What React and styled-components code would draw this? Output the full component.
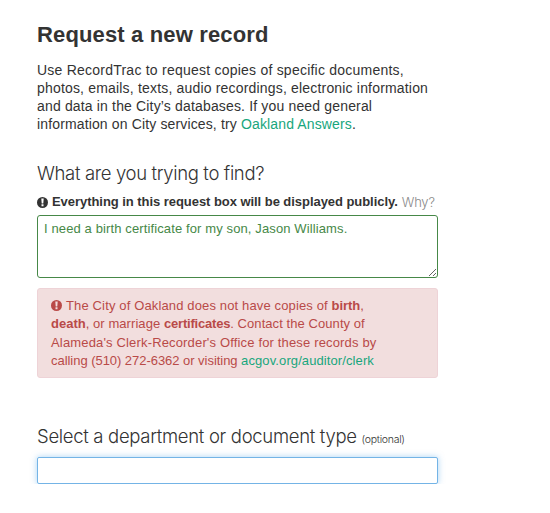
import React from "react";
import styled, { createGlobalStyle } from "styled-components";

const GlobalStyle = createGlobalStyle`
  * { box-sizing: border-box; }
  body {
    margin: 0;
    background: #fff;
    color: #333;
    font-family: "Liberation Sans", Arial, sans-serif;
  }
`;

const Page = styled.main`
  display: flex;
  flex-direction: column;
  width: 438px;
  padding: 20px 0 0 37px;
`;

const Title = styled.h1`
  margin: 0;
  font-size: 22px;
  line-height: 30px;
  font-weight: 700;
  letter-spacing: 0.15px;
`;

const Intro = styled.p`
  margin: 11px 0 0;
  font-size: 14px;
  line-height: 18px;
`;

const Line = styled.span`
  display: block;
  white-space: nowrap;
  letter-spacing: ${(p) => p.$track || 0}px;
`;

const Bold = styled.strong`
  font-weight: 700;
  letter-spacing: ${(p) => p.$track || 0}px;
`;

const Link = styled.a`
  color: #18a67d;
  text-decoration: none;
  letter-spacing: ${(p) => p.$track || 0.14}px;
`;

const Question = styled.h2`
  margin: ${(p) => p.$top}px 0 0;
  font-family: Inter, "Liberation Sans", sans-serif;
  font-size: 18.5px;
  line-height: 24px;
  font-weight: 300;
  letter-spacing: ${(p) => p.$track}px;
  white-space: nowrap;
`;

const Optional = styled.small`
  font-size: 10.5px;
  letter-spacing: -0.28px;
`;

const Notice = styled.div`
  display: flex;
  align-items: center;
  margin-top: 8px;
  font-size: 13px;
  line-height: 18px;
  white-space: nowrap;
`;

const NoticeText = styled.strong`
  margin-left: 4px;
  letter-spacing: -0.05px;
`;

const Why = styled.span`
  margin-left: 4px;
  font-family: Inter, "Liberation Sans", sans-serif;
  font-weight: 300;
  letter-spacing: -0.2px;
  color: #888;
`;

const Icon = styled.svg`
  display: ${(p) => (p.$inline ? "inline-block" : "block")};
  width: 11px;
  height: 11px;
  margin-right: ${(p) => (p.$inline ? 4 : 0)}px;
  vertical-align: -1px;
  flex: none;
`;

const RequestBox = styled.textarea`
  display: block;
  width: 401px;
  height: 63px;
  margin: 4px 0 0;
  padding: 4px 6px;
  border: 1px solid #468847;
  border-radius: 3px;
  outline: none;
  background: #fff;
  color: #468847;
  font: 13px/18px "Liberation Sans", Arial, sans-serif;
  letter-spacing: 0.12px;
  resize: vertical;
`;

const Alert = styled.div`
  width: 401px;
  height: 90px;
  margin-top: 10px;
  padding: 8px 13px;
  border: 1px solid #eed3d7;
  border-radius: 3px;
  background: #f2dede;
  color: #b94a48;
  font-size: 13px;
  line-height: 18.33px;
`;

const DepartmentInput = styled.input`
  width: 401px;
  height: 27px;
  margin-top: 5px;
  padding: 4px 6px;
  border: 1px solid #74b4e6;
  border-radius: 2px;
  outline: none;
  background: #fff;
  box-shadow: 0 0 6px rgba(82, 168, 236, 0.5);
`;

function AlertIcon({ mark, inline }) {
  return (
    <Icon viewBox="0 0 11 11" $inline={inline} aria-hidden="true">
      <circle cx="5.5" cy="5.5" r="5.5" fill="currentColor" />
      <path d="M4.3 1.6h2.4L6.3 6.5H4.7zM4.5 7.3h2v1.9h-2z" fill={mark} />
    </Icon>
  );
}

export default function App() {
  return (
    <>
      <GlobalStyle />
      <Page>
        <Title>Request a new record</Title>
        <Intro>
          <Line $track={0.23}>Use RecordTrac to request copies of specific documents,</Line>
          <Line $track={0.18}>photos, emails, texts, audio recordings, electronic information</Line>
          <Line $track={0.16}>and data in the City’s databases. If you need general</Line>
          <Line $track={0.14}>
            information on City services, try <Link href="#">Oakland Answers</Link>.
          </Line>
        </Intro>

        <Question $top={28} $track={-0.35}>What are you trying to find?</Question>
        <Notice>
          <AlertIcon mark="#fff" />
          <NoticeText>Everything in this request box will be displayed publicly.</NoticeText>
          <Why>Why?</Why>
        </Notice>
        <RequestBox spellCheck={false} defaultValue="I need a birth certificate for my son, Jason Williams." />

        <Alert>
          <Line $track={0.14}>
            <AlertIcon mark="#f2dede" inline />
            The City of Oakland does not have copies of <Bold $track={-0.05}>birth</Bold>,
          </Line>
          <Line $track={0.07}>
            <Bold>death</Bold>, or marriage <Bold $track={-0.2}>certificates</Bold>. Contact the County of
          </Line>
          <Line $track={0.16}>Alameda's Clerk-Recorder's Office for these records by</Line>
          <Line $track={-0.04}>
            calling (510) 272-6362 or visiting <Link href="#" $track={0.1}>acgov.org/auditor/clerk</Link>
          </Line>
        </Alert>

        <Question $top={46} $track={-0.31}>
          Select a department or document type <Optional>(optional)</Optional>
        </Question>
        <DepartmentInput type="text" aria-label="Department or document type" />
      </Page>
    </>
  );
}
